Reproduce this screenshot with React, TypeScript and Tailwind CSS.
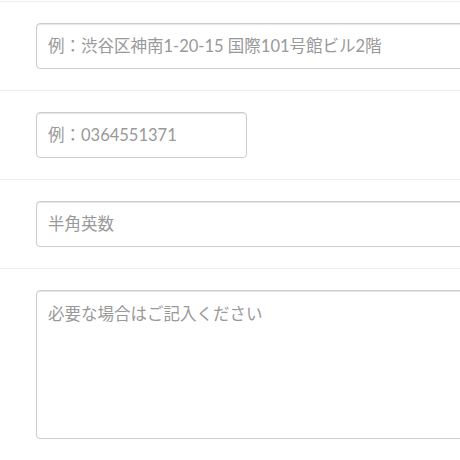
import React from 'react';

const fieldClass =
  'block h-[46px] rounded border border-[#ccc] bg-white pl-[11px] pr-3 text-[16.5px] text-[#555] shadow-[inset_0_1px_1px_rgba(0,0,0,0.1)] outline-none placeholder:text-[#999]';

export default function App() {
  return (
    <div
      className="h-[460px] w-[460px] overflow-hidden bg-white pt-px"
      style={{ fontFamily: 'Lato, "Noto Sans CJK JP", sans-serif' }}
    >
      {/* 住所 */}
      <div className="border-t border-[#eee] py-[21px] pl-9">
        <input className={`${fieldClass} w-[520px]`} placeholder="例：渋谷区神南1-20-15 国際101号館ビル2階" />
      </div>

      {/* 電話番号 */}
      <div className="border-t border-[#eee] py-[21px] pl-9">
        <input className={`${fieldClass} w-[211px]`} placeholder="例：0364551371" />
      </div>

      {/* ID */}
      <div className="border-t border-[#eee] py-[21px] pl-9">
        <input className={`${fieldClass} w-[520px]`} placeholder="半角英数" />
      </div>

      {/* 備考 */}
      <div className="border-t border-[#eee] py-[21px] pl-9">
        <textarea
          className="block h-[149px] w-[520px] resize-none rounded border border-[#ccc] bg-white pl-[11px] pr-3 pt-[11px] text-[16.5px] leading-6 text-[#555] shadow-[inset_0_1px_1px_rgba(0,0,0,0.1)] outline-none placeholder:text-[#999]"
          placeholder="必要な場合はご記入ください"
        />
      </div>
    </div>
  );
}
